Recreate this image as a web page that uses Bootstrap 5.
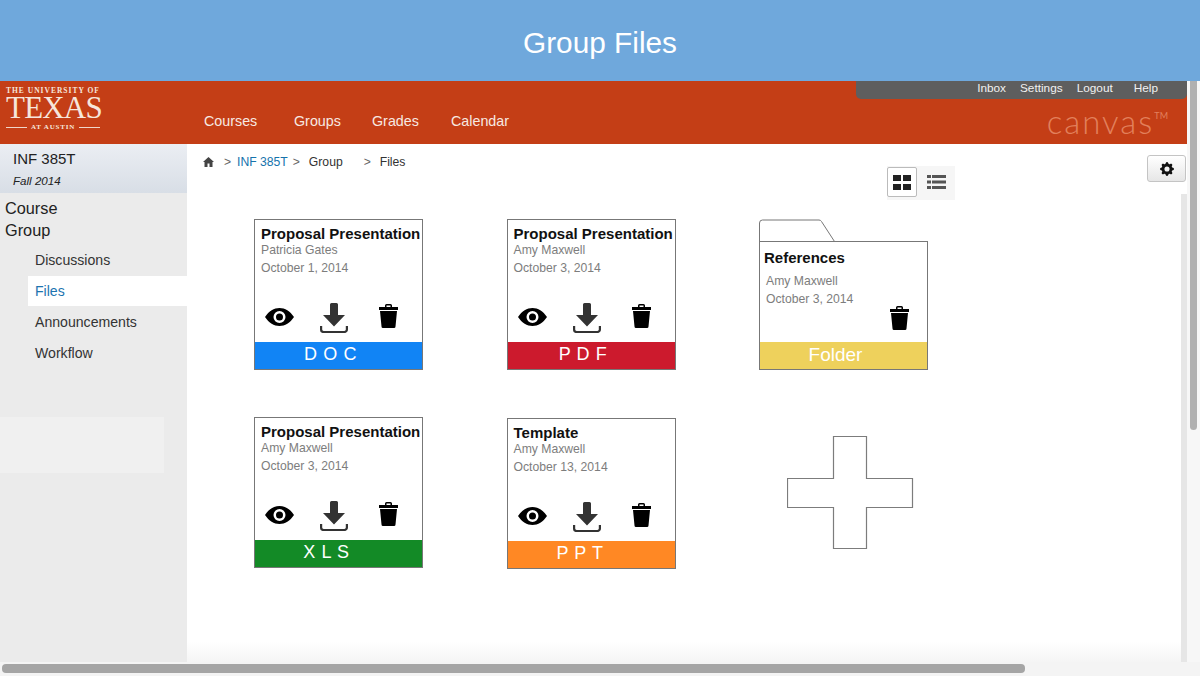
<!DOCTYPE html>
<html lang="en">
<head>
  <meta charset="UTF-8">
  <title>Group Files</title>
  <link href="https://cdn.jsdelivr.net/npm/bootstrap@5.3.0/dist/css/bootstrap.min.css" rel="stylesheet">
  <style>
    html, body { height: 676px; overflow: hidden; }
    body { font-family: "Liberation Sans", Arial, sans-serif; color: #222; background: #fff; }
    a { text-decoration: none; }

    .top-banner { height: 81px; background: #6fa8dc; color: #fff; font-size: 29.800px; line-height: 85px; text-align: center; }
    .app-row { height: 581px; }
    .app-col { width: 1187px; }
    .v-scroll { width: 13px; background: #f7f7f7; padding-left: 3px; }
    .v-thumb { width: 7px; height: 349px; background: #b0b0b0; border-radius: 0 0 4px 4px; }
    .h-scroll { height: 14px; background: #f4f4f4; padding: 2px 175px 2px 2px; }
    .h-thumb { height: 9px; background: #a5a5a5; border-radius: 4px; }

    .app-head { height: 63px; background: #c43e16; color: #fff; }
    .logo-box { width: 187px; padding: 6px 0 0 6px; font-family: "Liberation Serif", serif; color: #f6e6dc; line-height: 1; }
    .logo-top { font-size: 7.500px; font-weight: bold; letter-spacing: 1px; white-space: nowrap; }
    .logo-main { font-size: 31px; letter-spacing: -.8px; line-height: 26px; white-space: nowrap; }
    .logo-sub { font-size: 7px; font-weight: bold; letter-spacing: .8px; width: 94px; white-space: nowrap; margin-top: 3px; }
    .logo-sub::before, .logo-sub::after { content: ""; flex: 1; border-top: 1px solid #f0d5c8; }
    .course-nav { padding-top: 30px; font-size: 14.300px; }
    .course-nav a { color: #f7e9e2; }
    .course-nav a:nth-child(1) { width: 90px; margin-left: 17px; }
    .course-nav a:nth-child(2) { width: 78px; }
    .course-nav a:nth-child(3) { width: 79px; }
    .user-side { margin-left: auto; width: 331px; }
    .user-menu { height: 18px; background: #5e5e5e; border-radius: 0 0 5px 5px; font-size: 11.800px; line-height: 15px; padding-right: 29px; gap: 14px; }
    .user-menu a { color: #f1f1f1; }
    .help-link { margin-left: 7px; }
    .canvas-mark { font-family: Lato, sans-serif; font-weight: 300; font-size: 33px; color: #e2805c; letter-spacing: 2px; text-align: right; padding-right: 19px; line-height: 26px; margin-top: 9px; }
    .canvas-mark sup { font-size: 9px; top: -15px; letter-spacing: 0; font-weight: 400; }

    .app-body { height: 518px; }
    .side-col { width: 187px; background: #ebebeb; }
    .side-course { height: 49px; padding: 6px 0 0 13px; background: linear-gradient(#ebeef3, #d8dee6); font-size: 15px; line-height: 18px; }
    .side-course em { display: block; font-size: 11.600px; line-height: 18px; margin-top: 4px; }
    .side-title { font-size: 16.300px; line-height: 22px; padding-left: 5px; }
    .side-list { margin-top: 4px; font-size: 14.100px; }
    .side-list a { display: block; height: 31px; line-height: 31px; padding-left: 35px; color: #333; }
    .side-list a.on { background: #fff; color: #1d74b0; margin-left: 28px; padding-left: 7px; height: 30px; margin-bottom: 1px; }
    .side-patch { width: 164px; height: 56px; background: #f0f0f0; margin-top: 48px; }

    .main-col { padding-left: 67px; background: linear-gradient(#fff 96%, #f5f5f5); }
    .crumbs { height: 22px; padding-top: 14px; margin-left: -51px; font-size: 12.200px; line-height: 17px; color: #333; }
    .crumbs a { color: #1673ac; }
    .crumb-sep { color: #666; width: 17px; text-align: center; }
    .crumb-first { width: 19px; }
    .view-switch { width: 68px; height: 34px; background: #f6f6f6; margin-left: 633px; padding: 1px 1px 0 0; }
    .view-btn { width: 30px; height: 30px; background: #fff; border: 1px solid #bbb; border-radius: 2px; }
    .view-other { width: 37px; height: 30px; padding-left: 1px; }
    .file-grid { display: grid; grid-template-columns: repeat(3, 169px); column-gap: 83.500px; row-gap: 47px; margin-top: 19px; }
    .file-tile { height: 151px; background: #fff; border: 1px solid #777; display: flex; flex-direction: column; position: relative; }
    .tile-low { margin-top: 1px; }
    .tile-text { padding: 5px 0 0 6px; flex-grow: 1; }
    .tile-name { font-size: 15px; font-weight: bold; line-height: 18px; color: #111; white-space: nowrap; }
    .tile-who { font-size: 12.200px; line-height: 15px; color: #7d7d7d; }
    .tile-date { font-size: 12.200px; line-height: 15px; color: #7d7d7d; margin-top: 3px; }
    .tile-icons { position: absolute; left: 0; right: 0; top: 83px; height: 30px; }
    .tile-icon { position: absolute; }
    .icon-eye { left: 10px; top: 5px; }
    .icon-down { left: 65px; top: 0; }
    .icon-trash { left: 124px; top: 1px; }
    .icon-trash-folder { left: 130px; top: 64px; }
    .tile-bar { height: 27px; color: #fff; font-size: 18px; line-height: 25px; text-align: center; padding-right: 16px; letter-spacing: .6px; }
    .bar-doc { background: #1184f5; }
    .bar-pdf { background: #cc1a2d; }
    .bar-xls { background: #138a26; padding-right: 24px; }
    .bar-ppt { background: #ff8824; padding-right: 22px; }
    .bar-folder { background: #eed15c; font-size: 19px; letter-spacing: 0; }
    .folder-wrap { position: relative; }
    .folder-tab { display: block; position: absolute; left: 0; top: 0; }
    .folder-tile { height: 129px; margin-top: 22px; }
    .folder-tile .tile-text { padding: 7px 0 0 4px; }
    .folder-tile .tile-who { padding-left: 2px; margin-top: 7px; }
    .folder-tile .tile-date { padding-left: 2px; }
    .plus-shape { display: block; margin: 19px 0 0 28px; }
    .gear-btn { position: absolute; left: 1147px; top: 11px; width: 39px; height: 27px; padding: 0; background: linear-gradient(#fff, #e6e6e6); border: 1px solid #c4c4c4; border-radius: 3px; }
    .side-strip { position: absolute; right: 0; top: 50px; bottom: 0; width: 6px; background: #e6e6e6; }
    .body-wrap { position: relative; }
  </style>
</head>
<body>
  <svg width="0" height="0" class="d-block position-absolute">
    <symbol id="ico-eye" viewBox="0 0 29 18">
      <path fill="#000" fill-rule="evenodd" d="M0 9C4 3 9 0 14.500 0S25 3 29 9c-4 6-9 9-14.500 9S4 15 0 9zM14.500 3a6 6 0 1 0 0 12 6 6 0 0 0 0-12zm0 2.500a3.500 3.500 0 1 1 0 7 3.500 3.500 0 0 1 0-7z"/>
    </symbol>
    <symbol id="ico-down" viewBox="0 0 28 30">
      <path fill="#333" d="M10 1.500A1.500 1.500 0 0 1 11.500 0h5A1.500 1.500 0 0 1 18 1.500V12h7L14 23.500 3 12h7z"/>
      <path fill="none" stroke="#333" stroke-width="2.200" d="M1.100 23v3.500a2.500 2.500 0 0 0 2.500 2.500h20.800a2.500 2.500 0 0 0 2.500-2.500V23"/>
    </symbol>
    <symbol id="ico-trash" viewBox="0 0 19 24">
      <path fill="#000" fill-rule="evenodd" d="M6 3V1.500A1.500 1.500 0 0 1 7.500 0h4A1.500 1.500 0 0 1 13 1.500V3h6v3H0V3zm1.500 0h4V1.500h-4zM1 7h17l-1.500 15.500A1.500 1.500 0 0 1 15 24H4a1.500 1.500 0 0 1-1.500-1.500z"/>
    </symbol>
  </svg>

  <div class="top-banner">Group Files</div>

  <div class="app-row d-flex">
    <div class="app-col">
      <!-- header -->
      <div class="app-head d-flex">
        <div class="logo-box">
          <div class="logo-top">THE UNIVERSITY OF</div>
          <div class="logo-main">TEXAS</div>
          <div class="logo-sub d-flex align-items-center gap-1">AT AUSTIN</div>
        </div>
        <div class="course-nav d-flex">
          <a href="#">Courses</a>
          <a href="#">Groups</a>
          <a href="#">Grades</a>
          <a href="#">Calendar</a>
        </div>
        <div class="user-side">
          <div class="user-menu d-flex justify-content-end">
            <a href="#">Inbox</a>
            <a href="#">Settings</a>
            <a href="#">Logout</a>
            <a href="#" class="help-link">Help</a>
          </div>
          <div class="canvas-mark">canvas<sup>TM</sup></div>
        </div>
      </div>

      <div class="app-body body-wrap d-flex">
        <!-- sidebar -->
        <div class="side-col">
          <div class="side-course">INF 385T<em>Fall 2014</em></div>
          <div class="side-title mt-1">Course</div>
          <div class="side-title">Group</div>
          <div class="side-list">
            <a href="#">Discussions</a>
            <a href="#" class="on">Files</a>
            <a href="#">Announcements</a>
            <a href="#">Workflow</a>
          </div>
          <div class="side-patch"></div>
        </div>

        <!-- files -->
        <div class="main-col flex-grow-1">
          <div class="crumbs d-flex align-items-center">
            <svg width="11" height="10" viewBox="0 0 11 10" class="me-1"><path fill="#444" d="M5.500 0L11 5H9.500v5H6.500V6.500h-2V10h-3V5H0z"/></svg>
            <span class="crumb-sep crumb-first">&gt;</span><a href="#">INF 385T</a><span class="crumb-sep">&gt;</span><span class="ms-1">Group</span><span class="crumb-sep ms-3">&gt;</span><span class="ms-1">Files</span>
          </div>
          <div class="view-switch d-flex">
            <div class="view-btn d-flex align-items-center justify-content-center">
              <svg width="18" height="15" viewBox="0 0 18 15"><path fill="#222" d="M0 0h8v6H0zM10 0h8v6h-8zM0 9h8v6H0zM10 9h8v6h-8z"/></svg>
            </div>
            <div class="view-other d-flex align-items-center justify-content-center">
              <svg width="19" height="14" viewBox="0 0 19 14"><path fill="#555" d="M0 0h4v3H0zM5 0h14v3H5zM0 5.500h4v3H0zM5 5.500h14v3H5zM0 11h4v3H0zM5 11h14v3H5z"/></svg>
            </div>
          </div>

          <div class="file-grid">
            <div class="file-tile">
              <div class="tile-text">
                <div class="tile-name">Proposal Presentation</div>
                <div class="tile-who">Patricia Gates</div>
                <div class="tile-date">October 1, 2014</div>
              </div>
              <div class="tile-icons">
                <svg class="tile-icon icon-eye" width="29" height="18"><use href="#ico-eye"/></svg>
                <svg class="tile-icon icon-down" width="28" height="30"><use href="#ico-down"/></svg>
                <svg class="tile-icon icon-trash" width="19" height="24"><use href="#ico-trash"/></svg>
              </div>
              <div class="tile-bar bar-doc">D O C</div>
            </div>

            <div class="file-tile">
              <div class="tile-text">
                <div class="tile-name">Proposal Presentation</div>
                <div class="tile-who">Amy Maxwell</div>
                <div class="tile-date">October 3, 2014</div>
              </div>
              <div class="tile-icons">
                <svg class="tile-icon icon-eye" width="29" height="18"><use href="#ico-eye"/></svg>
                <svg class="tile-icon icon-down" width="28" height="30"><use href="#ico-down"/></svg>
                <svg class="tile-icon icon-trash" width="19" height="24"><use href="#ico-trash"/></svg>
              </div>
              <div class="tile-bar bar-pdf">P D F</div>
            </div>

            <div class="folder-wrap">
              <svg class="folder-tab" width="80" height="23" viewBox="0 0 80 23"><path fill="#fff" stroke="#777" d="M.5 22.500V4A3 3 0 0 1 3.500 1H60a3 3 0 0 1 2.500 1.500L75.500 22.500"/></svg>
              <div class="file-tile folder-tile">
                <div class="tile-text">
                  <div class="tile-name">References</div>
                  <div class="tile-who">Amy Maxwell</div>
                  <div class="tile-date">October 3, 2014</div>
                </div>
                <svg class="tile-icon icon-trash-folder" width="19" height="24"><use href="#ico-trash"/></svg>
                <div class="tile-bar bar-folder">Folder</div>
              </div>
            </div>

            <div class="file-tile">
              <div class="tile-text">
                <div class="tile-name">Proposal Presentation</div>
                <div class="tile-who">Amy Maxwell</div>
                <div class="tile-date">October 3, 2014</div>
              </div>
              <div class="tile-icons">
                <svg class="tile-icon icon-eye" width="29" height="18"><use href="#ico-eye"/></svg>
                <svg class="tile-icon icon-down" width="28" height="30"><use href="#ico-down"/></svg>
                <svg class="tile-icon icon-trash" width="19" height="24"><use href="#ico-trash"/></svg>
              </div>
              <div class="tile-bar bar-xls">X L S</div>
            </div>

            <div class="file-tile tile-low">
              <div class="tile-text">
                <div class="tile-name">Template</div>
                <div class="tile-who">Amy Maxwell</div>
                <div class="tile-date">October 13, 2014</div>
              </div>
              <div class="tile-icons">
                <svg class="tile-icon icon-eye" width="29" height="18"><use href="#ico-eye"/></svg>
                <svg class="tile-icon icon-down" width="28" height="30"><use href="#ico-down"/></svg>
                <svg class="tile-icon icon-trash" width="19" height="24"><use href="#ico-trash"/></svg>
              </div>
              <div class="tile-bar bar-ppt">P P T</div>
            </div>

            <svg class="plus-shape" width="127" height="114" viewBox="0 0 127 114">
              <path fill="#fff" stroke="#7c7c7c" stroke-width="1.200" d="M46.500 .5h33v42h46v29h-46v41h-33v-41h-46v-29h46z"/>
            </svg>
          </div>
        </div>

        <button class="gear-btn d-flex align-items-center justify-content-center" type="button">
          <svg width="14" height="14" viewBox="0 0 16 16"><path fill="#111" d="M9.405 1.050c-.413-1.400-2.397-1.400-2.810 0l-.100.340a1.464 1.464 0 0 1-2.105.872l-.310-.170c-1.283-.698-2.686.705-1.987 1.987l.169.311c.446.820.023 1.841-.872 2.105l-.340.100c-1.400.413-1.400 2.397 0 2.810l.340.100a1.464 1.464 0 0 1 .872 2.105l-.170.310c-.698 1.283.705 2.686 1.987 1.987l.311-.169a1.464 1.464 0 0 1 2.105.872l.100.340c.413 1.400 2.397 1.400 2.810 0l.100-.340a1.464 1.464 0 0 1 2.105-.872l.310.170c1.283.698 2.686-.705 1.987-1.987l-.169-.311a1.464 1.464 0 0 1 .872-2.105l.340-.100c1.400-.413 1.400-2.397 0-2.810l-.340-.100a1.464 1.464 0 0 1-.872-2.105l.170-.310c.698-1.283-.705-2.686-1.987-1.987l-.311.169a1.464 1.464 0 0 1-2.105-.872l-.100-.340zM8 10.930a2.929 2.929 0 1 1 0-5.860 2.929 2.929 0 0 1 0 5.858z"/></svg>
        </button>
        <div class="side-strip"></div>
      </div>
    </div>
    <div class="v-scroll"><div class="v-thumb"></div></div>
  </div>
  <div class="h-scroll"><div class="h-thumb"></div></div>

  <script src="https://cdn.jsdelivr.net/npm/bootstrap@5.3.0/dist/js/bootstrap.bundle.min.js"></script>
</body>
</html>
